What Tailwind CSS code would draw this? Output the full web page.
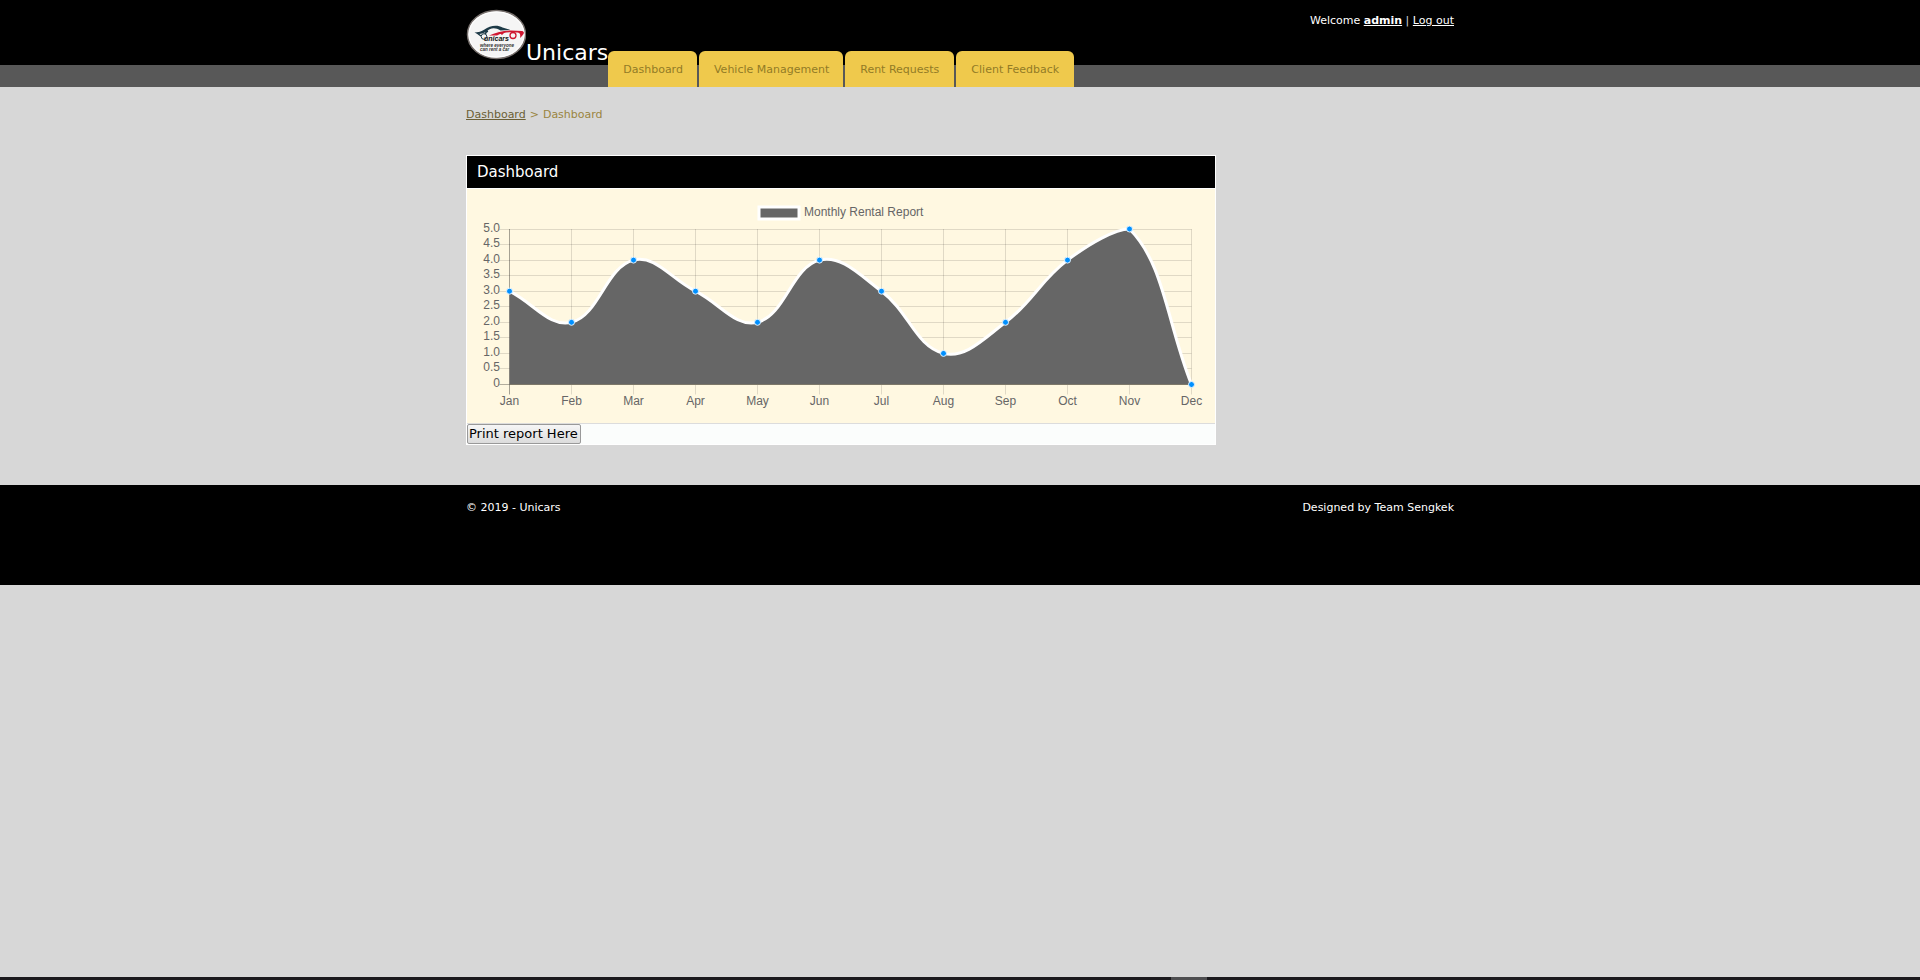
<!DOCTYPE html>
<html lang="en">
<head>
<meta charset="utf-8">
<title>Unicars - Dashboard</title>
<script src="https://cdn.jsdelivr.net/npm/@tailwindcss/browser@4"></script>
</head>
<body class="flex min-h-screen flex-col bg-[#d7d7d7] font-['DejaVu_Sans',sans-serif] text-[11px] leading-4 text-[#9a8541]">
<header class="bg-[linear-gradient(#000_65px,#585858_65px)]">
  <div class="mx-auto flex h-[87px] max-w-[988px] items-start justify-between">
    <div class="flex h-full items-end">
      <a href="#" class="flex items-end self-start pt-2 text-[22px] text-white">
        <svg class="mb-1 h-[54px] w-[60px]" viewBox="0 0 60 54" aria-label="Unicars logo">
          <ellipse cx="30.5" cy="26.5" rx="29" ry="24" fill="#f5f5f5" stroke="#77706d" stroke-width="1.5"/>
          <ellipse cx="30.5" cy="26.5" rx="27.5" ry="22.5" fill="none" stroke="#fff" stroke-width="1"/>
          <path d="M8.5 24.500c4 0 7-1 10-3 5-4 13-5 18-2l8 2.500-10 .5c-6-4-11-2-14 1-3 2-7 3-10 2z" fill="#1d3a47"/>
          <path d="M11 25l4 3m7-5c-3 1-4 5-1 6" fill="none" stroke="#1d3a47" stroke-width="1.5"/>
          <path d="M23 27.500c8-3 13-5 22-5l11 .5c3 1 2 3 0 5l-2 2c1-5-1-6-4-5.500-7-1-15 .5-19 3z" fill="#cf1731"/>
          <path d="M31 23l3 2 6-2-4 4z" fill="#cf1731"/>
          <circle cx="18" cy="28.500" r="2.8" fill="#f5f5f5" stroke="#1d3a47"/>
          <circle cx="47" cy="27.500" r="3" fill="#f5f5f5" stroke="#cf1731" stroke-width="1.3"/>
          <text x="18" y="33" font-size="7" font-weight="bold" font-style="italic" fill="#111" font-family="Liberation Sans">unicars</text>
          <text x="14" y="39" font-size="4.5" font-style="italic" font-weight="bold" font-family="Liberation Sans" fill="#333">where everyone</text>
          <text x="14" y="43" font-size="4.5" font-style="italic" font-weight="bold" font-family="Liberation Sans" fill="#333">can rent a car</text>
        </svg>
        <span class="leading-[26px]">Unicars</span>
      </a>
      <nav class="flex gap-0.5 text-[#927b26]">
        <a href="#" class="rounded-t-md bg-[#efc94c] pt-[11px] pr-[14px] pb-[9px] pl-[15px]">Dashboard</a>
        <a href="#" class="rounded-t-md bg-[#efc94c] pt-[11px] pr-[14px] pb-[9px] pl-[15px]">Vehicle Management</a>
        <a href="#" class="rounded-t-md bg-[#efc94c] px-[15px] pt-[11px] pb-[9px]">Rent Requests</a>
        <a href="#" class="rounded-t-md bg-[#efc94c] px-[15px] pt-[11px] pb-[9px]">Client Feedback</a>
      </nav>
    </div>
    <p class="pt-[13px] text-white">Welcome <a href="#" class="font-bold underline">admin</a> <span class="text-[#d7d7d7]">|</span> <a href="#" class="underline">Log out</a></p>
  </div>
</header>
<main class="mx-auto w-full max-w-[988px] pt-5 pb-10">
  <nav class="flex gap-1 pb-8"><a href="#" class="text-[#6b5f35] underline">Dashboard</a><span>&gt;</span><span>Dashboard</span></nav>
  <section class="max-w-[750px] border border-white bg-[#fbfdfc]">
    <h2 class="border-b border-white bg-black px-[10px] text-[15px] leading-8 text-white">Dashboard</h2>
    <div class="border-b border-[#dcdcdc] bg-[#fff8e1]">
      <svg id="chart" class="block w-full" viewBox="0 0 748 234" font-family="Liberation Sans, sans-serif" font-size="12" fill="#666"></svg>
    </div>
    <button type="button" class="block rounded-xs border border-[#999] bg-linear-to-b from-[#f6f6f6] to-[#dcdcdc] pr-0.5 pl-px text-[13px] leading-[18px] text-black">Print report Here</button>
  </section>
</main>
<footer class="bg-black text-white">
  <div class="mx-auto flex h-[100px] max-w-[988px] justify-between pt-[15px]"><p>© 2019 - Unicars</p><p>Designed by Team Sengkek</p></div>
</footer>
<div class="mt-auto flex h-[3px] bg-[#1b1a1d]"><div class="ml-[61%] w-9 bg-[#4e4e50]"></div></div>
<script>
const months = ['Jan','Feb','Mar','Apr','May','Jun','Jul','Aug','Sep','Oct','Nov','Dec'];
const values = [3, 2, 4, 3, 2, 4, 3, 1, 2, 4, 5, 0];
const left = 42.5, step = 62, top_ = 40, bottom = 195.5, right = left + 11 * step;
const yOf = v => bottom - v * (bottom - top_) / 5;
const pts = values.map((v, i) => ({ x: left + i * step, y: yOf(v) }));
const clamp = y => Math.min(bottom, Math.max(top_, y));
// Smooth curve: control points weighted by the distance to each neighbour
pts.forEach((p, i) => {
  const a = pts[i - 1] || p, b = pts[i + 1] || p;
  const d0 = Math.hypot(p.x - a.x, p.y - a.y), d1 = Math.hypot(b.x - p.x, b.y - p.y);
  const f0 = .4 * d0 / (d0 + d1), f1 = .4 * d1 / (d0 + d1);
  p.in = [p.x - f0 * (b.x - a.x), clamp(p.y - f0 * (b.y - a.y))];
  p.out = [p.x + f1 * (b.x - a.x), clamp(p.y + f1 * (b.y - a.y))];
});
let curve = `M${pts[0].x} ${pts[0].y}`;
for (let i = 1; i < pts.length; i++) curve += `C${pts[i - 1].out} ${pts[i].in} ${pts[i].x},${pts[i].y}`;
let s = '';
for (let k = 0; k <= 10; k++) {
  const y = Math.floor(yOf(k / 2)) + .5;
  s += `<path d="M${left - 10} ${y}H${right}" stroke="#000" stroke-opacity="${k ? .12 : .3}"/>`;
  s += `<text x="33" y="${Math.floor(y) + 3}" text-anchor="end">${k ? (k / 2).toFixed(1) : 0}</text>`;
}
months.forEach((m, i) => {
  const x = left + i * step;
  s += `<path d="M${x} ${top_}V${bottom + 10}" stroke="#000" stroke-opacity="${i ? .12 : .35}"/>`;
  s += `<text x="${x}" y="216" text-anchor="middle">${m}</text>`;
});
s += `<path d="${curve}V${bottom}H${left}Z"/><path d="${curve}" fill="none" stroke="#fff" stroke-width="3"/>`;
s += `<path d="M${left} ${bottom}H${right}" stroke="#7d7869"/>`;
pts.forEach(p => s += `<circle cx="${p.x}" cy="${p.y}" r="3" fill="#0090ff" stroke="#e4f3ff"/>`);
s += `<rect x="292" y="18" width="40" height="12" stroke="#fff" stroke-width="3"/><text x="337" y="27">Monthly Rental Report</text>`;
document.getElementById('chart').innerHTML = s;
</script>
</body>
</html>
